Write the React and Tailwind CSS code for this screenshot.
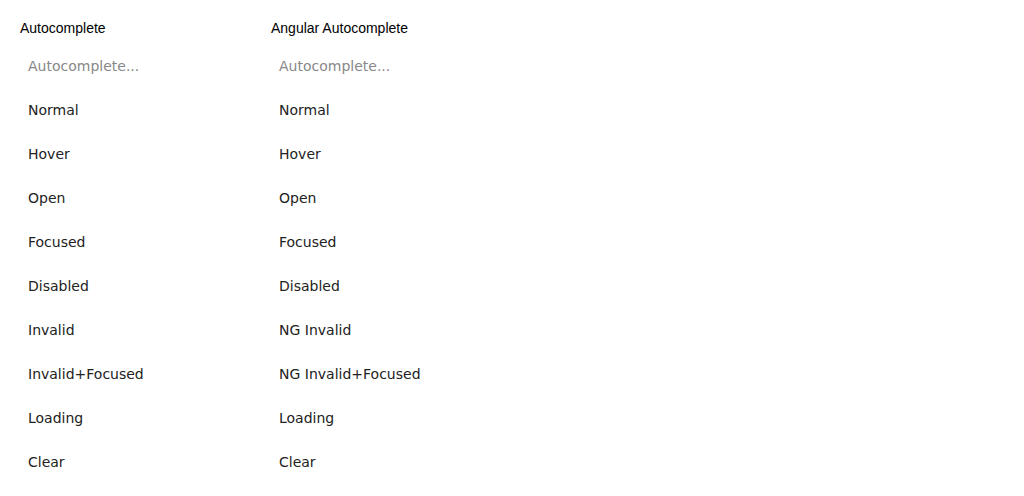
import React from "react";

const left = ["Normal","Hover","Open","Focused","Disabled","Invalid","Invalid+Focused","Loading","Clear"];
const right = ["Normal","Hover","Open","Focused","Disabled","NG Invalid","NG Invalid+Focused","Loading","Clear"];

function Column({ title, items }) {
  return (
    <div className="flex flex-col w-[251px]">
      <div className="h-[16px] flex items-center text-[14px] text-black mt-[20px]">
        <span className="font-['Liberation_Sans',Arial,sans-serif]">{title}</span>
      </div>
      <div className="flex flex-col mt-[16px] font-['DejaVu_Sans',sans-serif] text-[14px]">
        <div className="h-[44px] flex items-center pl-2 text-[#888] -mt-[8px]">Autocomplete...</div>
        {items.map((t) => (
          <div key={t} className="h-[44px] flex items-center pl-2 text-[#222]">{t}</div>
        ))}
      </div>
    </div>
  );
}

export default function App() {
  return (
    <div className="bg-white w-[1024px] h-[496px] pl-[20px] flex">
      <Column title="Autocomplete" items={left} />
      <Column title="Angular Autocomplete" items={right} />
    </div>
  );
}
